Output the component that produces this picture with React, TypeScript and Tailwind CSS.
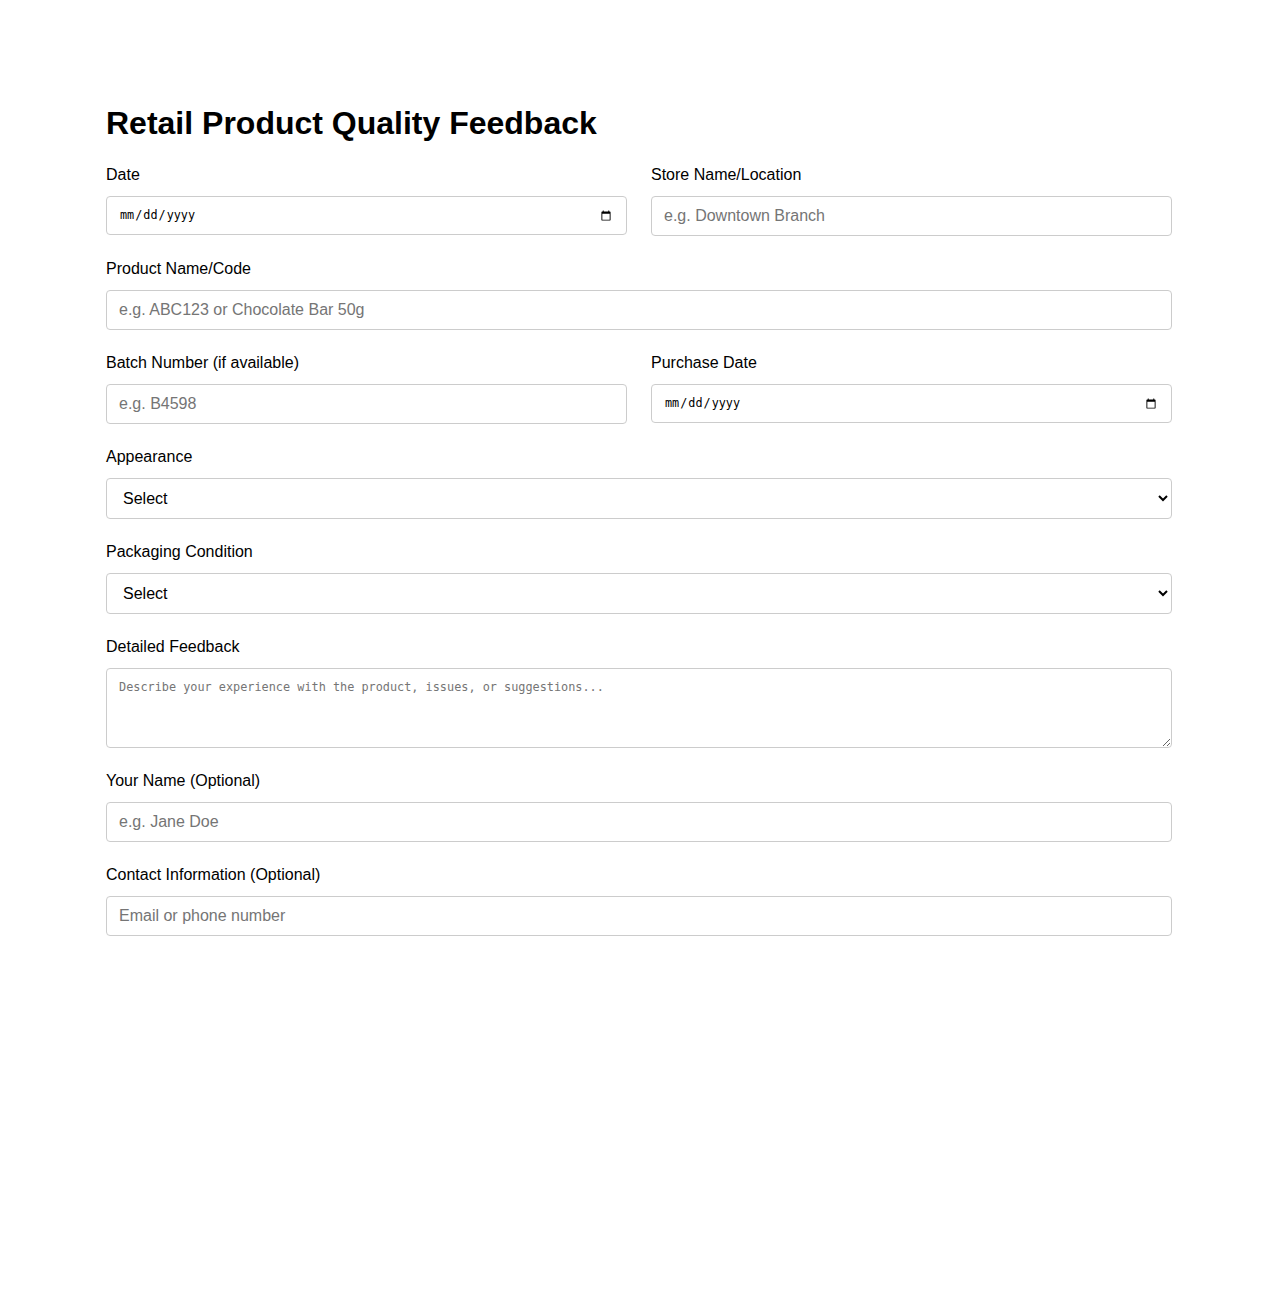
const box = 'w-full rounded border border-[#ccc] bg-white text-black outline-none'
const text = `${box} h-10 px-3 text-base placeholder:text-[#757575] [font-family:'Liberation_Sans',Arial,sans-serif]`
const date = `${box} h-[39px] pl-3 pr-3 text-[11.8px] [font-family:'DejaVu_Sans_Mono',monospace]`
const select = `${box} h-[41px] px-3 text-base [font-family:'Liberation_Sans',Arial,sans-serif]`

function Field({ label, children }: { label: string; children: React.ReactNode }) {
  return (
    <div className="mb-6 flex flex-col">
      <label className="mb-3 block text-base leading-[18px] text-black">{label}</label>
      {children}
    </div>
  )
}

export default function App() {
  return (
    <div className="min-h-[1300px] bg-white [font-family:'Liberation_Sans',Arial,sans-serif]">
      <div className="mx-auto w-[1066px] pt-[105px]">
        <h1 className="mb-6 text-[32px] leading-[37px] font-bold text-black">Retail Product Quality Feedback</h1>

        {/* Date + store */}
        <div className="grid grid-cols-2 gap-x-6">
          <Field label="Date">
            <input type="date" className={date} />
          </Field>
          <Field label="Store Name/Location">
            <input type="text" placeholder="e.g. Downtown Branch" className={text} />
          </Field>
        </div>

        <Field label="Product Name/Code">
          <input type="text" placeholder="e.g. ABC123 or Chocolate Bar 50g" className={text} />
        </Field>

        <div className="grid grid-cols-2 gap-x-6">
          <Field label="Batch Number (if available)">
            <input type="text" placeholder="e.g. B4598" className={text} />
          </Field>
          <Field label="Purchase Date">
            <input type="date" className={date} />
          </Field>
        </div>

        <Field label="Appearance">
          <select className={select} defaultValue="">
            <option value="">Select</option>
            <option>Excellent</option>
            <option>Good</option>
            <option>Fair</option>
            <option>Poor</option>
          </select>
        </Field>

        <Field label="Packaging Condition">
          <select className={select} defaultValue="">
            <option value="">Select</option>
            <option>Intact</option>
            <option>Slightly damaged</option>
            <option>Damaged</option>
          </select>
        </Field>

        <Field label="Detailed Feedback">
          <textarea
            placeholder="Describe your experience with the product, issues, or suggestions..."
            className={`${box} block h-20 px-3 py-[11px] text-[11.85px] leading-[14px] placeholder:text-[#757575] [font-family:'DejaVu_Sans_Mono',monospace]`}
          />
        </Field>

        <Field label="Your Name (Optional)">
          <input type="text" placeholder="e.g. Jane Doe" className={text} />
        </Field>

        <Field label="Contact Information (Optional)">
          <input type="text" placeholder="Email or phone number" className={text} />
        </Field>
      </div>
    </div>
  )
}
